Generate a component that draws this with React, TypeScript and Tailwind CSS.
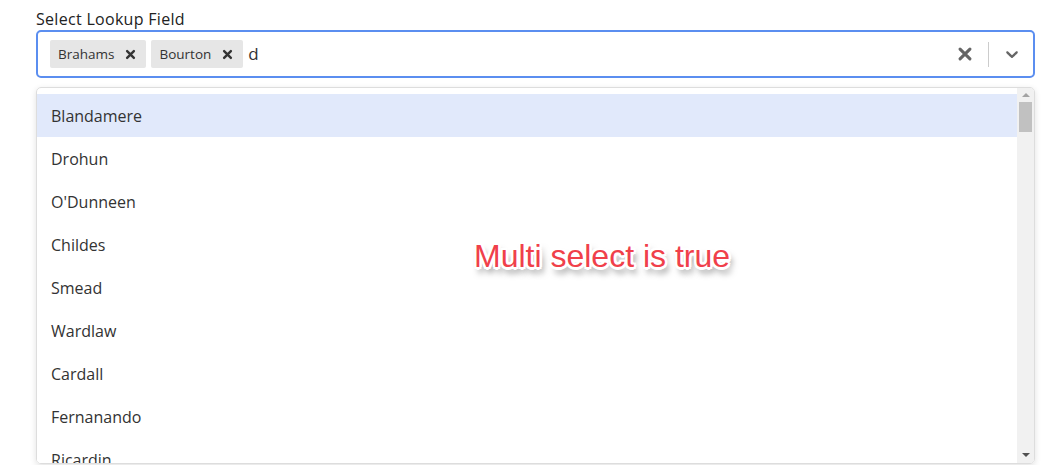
const OPTIONS = [
  "Blandamere",
  "Drohun",
  "O'Dunneen",
  "Childes",
  "Smead",
  "Wardlaw",
  "Cardall",
  "Fernanando",
  "Ricardin",
  "Lemmers",
];

const SELECTED = ["Brahams", "Bourton"];

function Cross({ className }: { className?: string }) {
  return (
    <svg viewBox="0 0 20 20" className={className} fill="none" stroke="currentColor" strokeLinecap="round">
      <path d="M5.5 5.5l9 9M14.5 5.5l-9 9" />
    </svg>
  );
}

function Chevron({ className }: { className?: string }) {
  return (
    <svg viewBox="0 0 20 20" className={className} fill="currentColor">
      <path d="M4.516 7.548c0.436-0.446 1.043-0.481 1.576 0l3.908 3.747 3.908-3.747c0.533-0.481 1.141-0.446 1.574 0 0.436 0.445 0.408 1.197 0 1.615-0.406 0.418-4.695 4.502-4.695 4.502-0.217 0.223-0.502 0.335-0.787 0.335s-0.57-0.112-0.789-0.335c0 0-4.287-4.084-4.695-4.502s-0.436-1.17 0-1.615z" />
    </svg>
  );
}

export default function App() {
  return (
    <div
      className="relative h-[465px] w-[1043px] overflow-hidden bg-white text-[#333]"
      style={{ fontFamily: '"Open Sans", "Noto Sans", sans-serif' }}
    >
      <div className="pl-[36px] pr-[8px] pt-[8px]">
        <div className="text-[16px] leading-[22px] tracking-[0.3px] text-[#222]">Select Lookup Field</div>

        <div className="flex h-[48px] items-center rounded-[5px] border-2 border-[#5b8ef0] bg-white">
          <div className="flex flex-1 items-center gap-[5px] pl-[12px]">
            {SELECTED.map((s) => (
              <div key={s} className="flex h-[28px] items-center rounded-[2px] bg-[#e6e6e6] pl-[8px] pr-[6px] text-[13.5px] text-[#333]">
                <span>{s}</span>
                <Cross className="ml-[9px] mr-[2px] h-[15px] w-[15px] stroke-[3.2] text-[#333]" />
              </div>
            ))}
            <span className="text-[17px] text-[#333]">d</span>
          </div>
          <div className="flex items-center">
            <Cross className="mr-[12px] h-[22px] w-[22px] stroke-[2.8] text-[#666]" />
            <div className="h-[25px] w-px bg-[#ccc]" />
            <Chevron className="ml-[13px] mr-[11px] h-[20px] w-[20px] text-[#666]" />
          </div>
        </div>

        <div className="mt-[9px] flex h-[377px] overflow-hidden rounded-[5px] border border-[#ddd] shadow-[0_2px_6px_rgba(0,0,0,0.12)]">
          <div className="flex-1 overflow-hidden pt-[6px]">
            {OPTIONS.map((o, i) => (
              <div
                key={o}
                className={
                  "flex h-[43px] items-center pl-[14px] text-[16px] " +
                  (i === 0 ? "bg-[#e1e9fb]" : "bg-white")
                }
              >
                {o}
              </div>
            ))}
          </div>
          <div className="flex w-[17px] flex-col items-center bg-[#f1f1f1]">
            <div className="mt-[5px] h-0 w-0 border-x-[4px] border-b-[4px] border-x-transparent border-b-[#a3a3a3]" />
            <div className="mt-[5px] h-[30px] w-[13px] bg-[#c1c1c1]" />
            <div className="flex-1" />
            <div className="mb-[6px] h-0 w-0 border-x-[4px] border-t-[4px] border-x-transparent border-t-[#505050]" />
          </div>
        </div>
      </div>

      <div
        className="absolute left-[474px] top-[236px] text-[32px] leading-[40px] text-[#f0404a]"
        style={{
          fontFamily: '"Liberation Sans", Arial, sans-serif',
          textShadow:
            "-2px -2px 0 #fff, 2px -2px 0 #fff, -2px 2px 0 #fff, 2px 2px 0 #fff, 0 -2.5px 0 #fff, 0 2.5px 0 #fff, -2.5px 0 0 #fff, 2.5px 0 0 #fff, 3px 6px 6px rgba(0,0,0,0.55)",
        }}
      >
        Multi select is true
      </div>
    </div>
  );
}
